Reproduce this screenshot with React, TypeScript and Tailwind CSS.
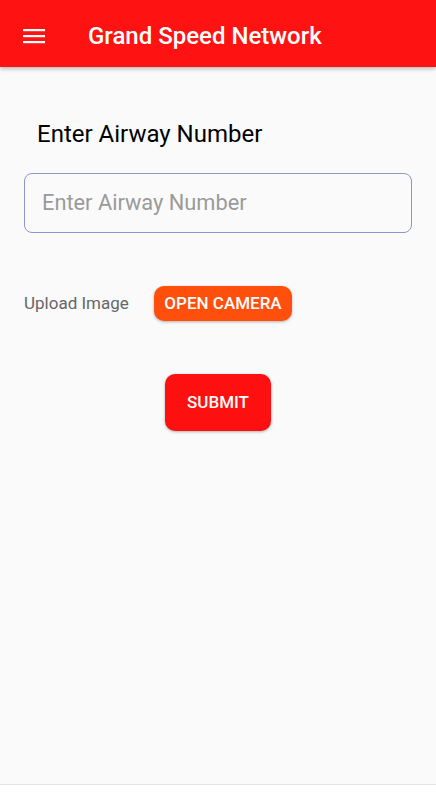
export default function App() {
  return (
    <div className="w-[436px] h-[800px] flex flex-col bg-white font-['Roboto',sans-serif]">
      <header className="h-[67px] shrink-0 bg-[#fe1212] flex items-center pt-[4px] shadow-[0_2px_4px_rgba(0,0,0,0.25)] z-10">
        <div className="w-[88px] pl-[23px] flex">
          <svg width="22" height="16" viewBox="0 0 22 16">
            <rect x="0" y="1" width="22" height="2.2" fill="#fff" />
            <rect x="0" y="7" width="22" height="2.2" fill="#fff" />
            <rect x="0" y="13" width="22" height="2.2" fill="#fff" />
          </svg>
        </div>
        <h1 className="text-white text-[24px] font-medium leading-[28px]">Grand Speed Network</h1>
      </header>
      <main className="flex-1 bg-[#fafafa] border-b border-[#e4e4e4] px-6 pt-[50px]">
        <h2 className="pl-[13px] text-[24px] text-black leading-[34px]">Enter Airway Number</h2>
        <div className="mt-[22px] w-[388px] h-[60px] rounded-[8px] border border-[#8d96c9] flex items-center px-[17px]">
          <span className="text-[21.8px] text-[#9a9a9a]">Enter Airway Number</span>
        </div>
        <div className="mt-[53px] flex items-center">
          <span className="text-[17px] text-[#666] w-[130px]">Upload Image</span>
          <button className="h-[35px] w-[138px] rounded-[10px] bg-[#ff4f0c] text-white text-[17px] font-medium shadow-[0_1px_3px_rgba(0,0,0,0.3)]">
            OPEN CAMERA
          </button>
        </div>
        <div className="mt-[53px] flex justify-center">
          <button className="w-[106px] h-[57px] rounded-[10px] bg-[#ff1010] text-white text-[17px] font-medium shadow-[0_1px_3px_rgba(0,0,0,0.3)]">
            SUBMIT
          </button>
        </div>
      </main>
      <div className="h-[15px] bg-white" />
    </div>
  );
}
